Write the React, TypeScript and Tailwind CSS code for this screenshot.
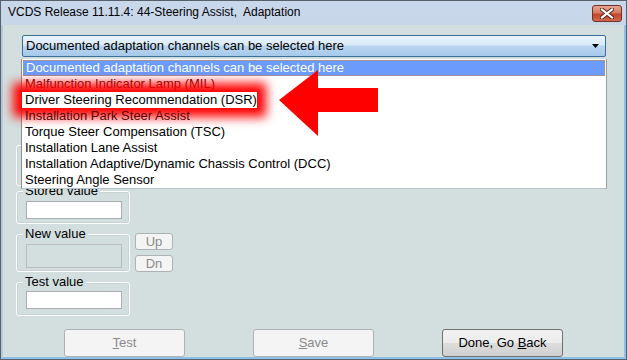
import React from "react";

const uiFont = { fontFamily: '"Liberation Sans", Arial, sans-serif' };
const titleFont = { fontFamily: '"Liberation Sans", Arial, sans-serif' };

function GroupBox({ label, className, children }: { label?: string; className?: string; children?: React.ReactNode }) {
  return (
    <div className={"relative border border-[#fbfdfd] rounded-[3px] shadow-[inset_0_0_0_1px_#c9d3d4] " + (className || "")}>
      {label && (
        <span className="absolute -top-[9px] left-[6px] px-[2px] bg-[#d3dfdf] text-[13px] leading-[16px] text-black">
          {label}
        </span>
      )}
      {children}
    </div>
  );
}

function DisabledBtn({ children, className }: { children: React.ReactNode; className?: string }) {
  return (
    <div
      className={
        "flex items-center justify-center border border-[#adb2b5] rounded-[3px] bg-[#f4f4f4] text-[#8a8a8a] text-[13px] " +
        (className || "")
      }
    >
      {children}
    </div>
  );
}

export default function App() {
  const items = [
    "Malfunction Indicator Lamp (MIL)",
    "Driver Steering Recommendation (DSR)",
    "Installation Park Steer Assist",
    "Torque Steer Compensation (TSC)",
    "Installation Lane Assist",
    "Installation Adaptive/Dynamic Chassis Control (DCC)",
    "Steering Angle Sensor",
  ];
  return (
    <div
      className="relative w-[627px] h-[360px] overflow-hidden border border-[#56616c] flex flex-col bg-[linear-gradient(to_bottom,#c9d7ea,#b8c9e0)]"
      style={uiFont}
    >
      {/* Title bar */}
      <div className="h-[24px] flex items-start pl-[7px] pr-[4px] pt-[4px] shrink-0">
        <span className="text-[12px] leading-[15px] text-black" style={titleFont}>
          VCDS Release 11.11.4: 44-Steering Assist,&nbsp; Adaptation
        </span>
        <div className="ml-auto w-[30px] h-[17px] rounded-[3px] border border-[#6e3326] bg-[linear-gradient(to_bottom,#e6a591_0%,#d47b63_45%,#c0452d_55%,#cf6b4d_100%)] flex items-center justify-center">
          <svg width="14" height="11" viewBox="0 0 14 11">
            <path d="M2 1.5 L12 9.5 M12 1.5 L2 9.5" stroke="#5a2418" strokeWidth="4" strokeLinecap="square" />
            <path d="M2 1.5 L12 9.5 M12 1.5 L2 9.5" stroke="#ffffff" strokeWidth="2.2" strokeLinecap="square" />
          </svg>
        </div>
      </div>

      {/* Body */}
      <div className="relative flex-1 flex flex-col bg-[#d3dfdf] border-l-[2px] border-r-[2px] border-b-[2px] border-l-[#b7c8da] border-r-[#8fbfe6] border-b-[#8fbfe6]">
        {/* Combobox */}
        <div className="ml-[19px] mt-[10px] w-[584px] h-[22px] rounded-[2px] border border-[#3c6c98] bg-[linear-gradient(to_bottom,#eaf4fc_0%,#d9eaf8_45%,#b9d6f0_50%,#a6c9ea_100%)] flex items-center pl-[3px] pr-[6px]">
          <span className="text-[13px] leading-[16px] text-black">Documented adaptation channels can be selected here</span>
          <svg className="ml-auto" width="7" height="4" viewBox="0 0 7 4">
            <path d="M0 0 H7 L3.5 4 Z" fill="#000" />
          </svg>
        </div>

        {/* Groups */}
        <div className="ml-[13px] mt-[88px] flex flex-col">
          <GroupBox className="w-[114px] h-[41px]" />
          <GroupBox label="Stored value" className="mt-[5px] w-[114px] h-[33px] pl-[9px] pt-[9px]">
            <div className="w-[96px] h-[18px] bg-white border border-[#abadb3]" />
          </GroupBox>
          <div className="mt-[10px] flex items-start">
            <GroupBox label="New value" className="w-[114px] h-[38px] pl-[9px] pt-[9px]">
              <div className="w-[96px] h-[24px] border border-[#b9bcbc] bg-[#d3dfdf]" />
            </GroupBox>
            <div className="ml-[5px] -mt-[1px] flex flex-col gap-[5px]">
              <DisabledBtn className="w-[38px] h-[17px]">Up</DisabledBtn>
              <DisabledBtn className="w-[38px] h-[17px]">Dn</DisabledBtn>
            </div>
          </div>
          <GroupBox label="Test value" className="mt-[10px] w-[114px] h-[34px] pl-[9px] pt-[8px]">
            <div className="w-[96px] h-[18px] bg-white border border-[#abadb3]" />
          </GroupBox>
        </div>

        {/* Bottom buttons */}
        <div className="mt-[13px] ml-[61px] flex gap-[68px]">
          <DisabledBtn className="w-[121px] h-[28px]">
            <span><u>T</u>est</span>
          </DisabledBtn>
          <DisabledBtn className="w-[121px] h-[28px]">
            <span><u>S</u>ave</span>
          </DisabledBtn>
          <div className="w-[121px] h-[28px] flex items-center justify-center rounded-[3px] border border-[#707070] bg-[linear-gradient(to_bottom,#f2f2f2_0%,#ebebeb_50%,#dddddd_50%,#cfcfcf_100%)] text-[13px] text-black">
            <span>Done, Go <u>B</u>ack</span>
          </div>
        </div>

        {/* Dropdown list overlay */}
        <div className="absolute left-[18px] top-[34px] w-[586px] h-[130px] bg-white border-l border-l-[#8a8f94] border-r border-r-[#9a9ea2] border-b border-b-[#b5c2cc] pt-[1px]">
          <div className="h-[16px] mx-[1px] bg-[#6a9bfd] border border-dotted border-[#e0863a] flex items-center pl-[2px]">
            <span className="text-[13px] leading-[16px] text-white">Documented adaptation channels can be selected here</span>
          </div>
          {items.map((t, i) =>
            i === 1 ? (
              <div key={t} className="h-[16px] flex items-center">
                <div className="h-[16px] w-[235px] bg-white shadow-[0_0_10px_9px_#ff0000] flex items-center pl-[3px]">
                  <span className="text-[13px] leading-[16px] text-black">{t}</span>
                </div>
              </div>
            ) : (
              <div key={t} className="h-[16px] flex items-center pl-[3px]">
                <span className={"text-[13px] leading-[16px] " + (i === 0 || i === 2 ? "text-[#5a0000]" : "text-black")}>{t}</span>
              </div>
            )
          )}
        </div>
      </div>

      {/* Red arrow */}
      <svg className="absolute left-0 top-0 pointer-events-none" width="627" height="360" viewBox="0 0 627 360">
        <polygon points="278,99 317,69 317,87 377,87 377,111 317,111 317,135" fill="#ff0000" />
      </svg>
    </div>
  );
}
